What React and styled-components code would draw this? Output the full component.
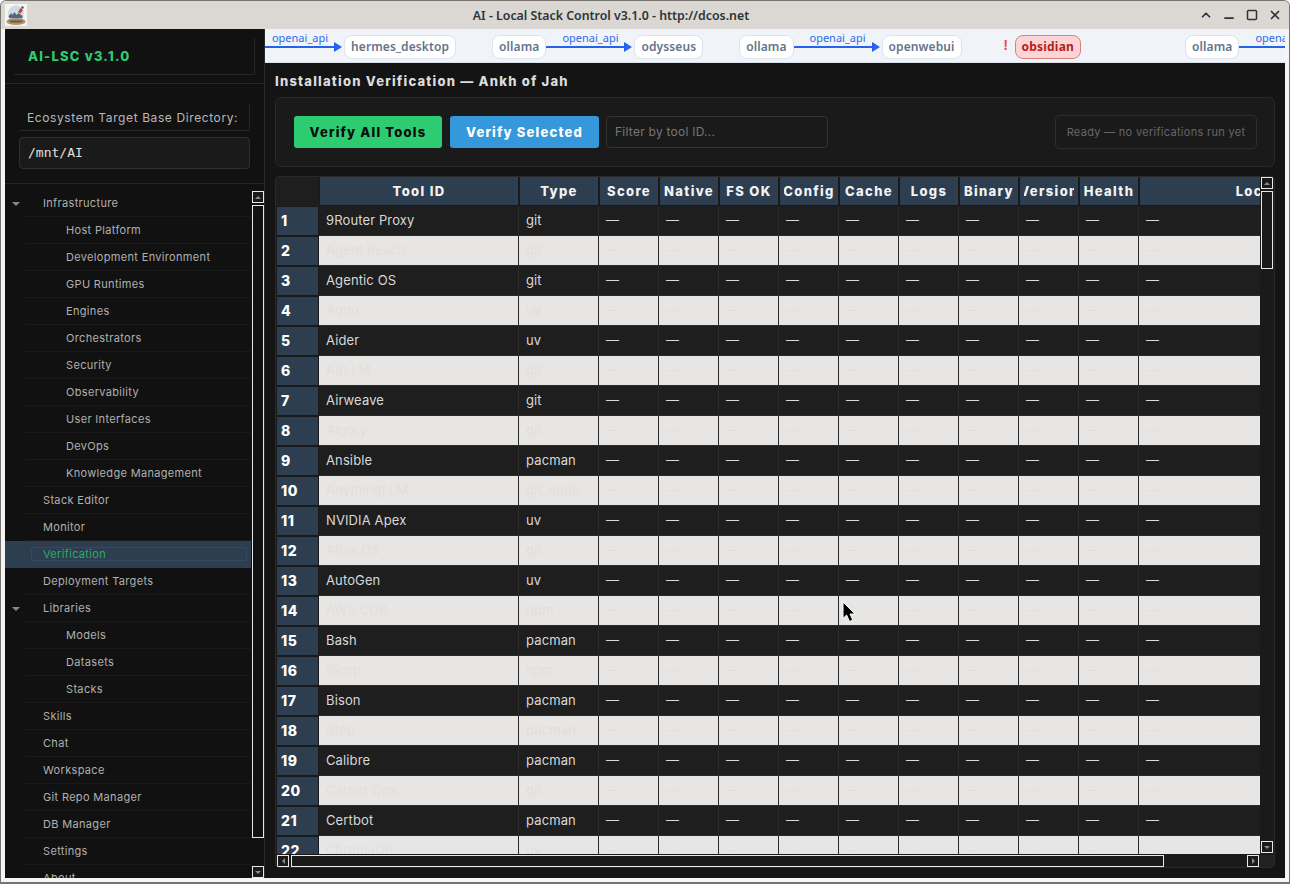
import React from 'react'
import styled, { createGlobalStyle } from 'styled-components'
import { ChevronUp, Minus, Square, X } from 'lucide-react'

const treeItems = [
  { label: 'Infrastructure', open: true },
  { label: 'Host Platform', child: true },
  { label: 'Development Environment', child: true },
  { label: 'GPU Runtimes', child: true },
  { label: 'Engines', child: true },
  { label: 'Orchestrators', child: true },
  { label: 'Security', child: true },
  { label: 'Observability', child: true },
  { label: 'User Interfaces', child: true },
  { label: 'DevOps', child: true },
  { label: 'Knowledge Management', child: true },
  { label: 'Stack Editor' },
  { label: 'Monitor' },
  { label: 'Verification', active: true },
  { label: 'Deployment Targets' },
  { label: 'Libraries', open: true },
  { label: 'Models', child: true },
  { label: 'Datasets', child: true },
  { label: 'Stacks', child: true },
  { label: 'Skills' },
  { label: 'Chat' },
  { label: 'Workspace' },
  { label: 'Git Repo Manager' },
  { label: 'DB Manager' },
  { label: 'Settings' },
  { label: 'About' },
]

const columns = ['Tool ID', 'Type', 'Score', 'Native', 'FS OK', 'Config', 'Cache', 'Logs', 'Binary', 'Version', 'Health', 'Location']

const tools = [
  ['9Router Proxy', 'git'],
  ['Agent Reach', 'git'],
  ['Agentic OS', 'git'],
  ['Agno', 'uv'],
  ['Aider', 'uv'],
  ['AirLLM', 'git'],
  ['Airweave', 'git'],
  ['Algory', 'git'],
  ['Ansible', 'pacman'],
  ['AnythingLLM', 'git_node'],
  ['NVIDIA Apex', 'uv'],
  ['Atlas OS', 'git'],
  ['AutoGen', 'uv'],
  ['AWS CDK', 'npm'],
  ['Bash', 'pacman'],
  ['Bicep', 'npm'],
  ['Bison', 'pacman'],
  ['Btop', 'pacman'],
  ['Calibre', 'pacman'],
  ['Career Ops', 'git'],
  ['Certbot', 'pacman'],
  ['ChromaDB', 'uv'],
]

const GRID = '200px 80px repeat(9, 60px) 260px'

const Arrow = ({ clipped }) => (
  <Edge $clipped={clipped}>
    <EdgeLabel>openai_api</EdgeLabel>
    <EdgeLine>
      <EdgeHead />
    </EdgeLine>
  </Edge>
)

const ScrollButton = ({ dir }) => (
  <ScrollBtn>
    <Tri $dir={dir} />
  </ScrollBtn>
)

const App = () => {
  return (
    <Window>
      <GlobalStyle />
      <TitleBar>
        <AppIcon viewBox="0 0 22 22">
          <rect width="22" height="22" fill="#f6f4ef" />
          <circle cx="11" cy="9.5" r="8" fill="#cfdbe4" />
          <path d="M3.5 12 l3 -3 l1 2 l2 -3 l2 3 l2 -2 l4 3 v2 H4z" fill="#4d6785" />
          <path d="M13 8 l2.5 -4 l2.5 2 l-2.5 3.5z" fill="#c2452e" />
          <path d="M16 3 l2 -1 l1 2 l-2 1z" fill="#2f5f9e" />
          <ellipse cx="11" cy="17.5" rx="9.5" ry="3.6" fill="#ab9270" />
          <path d="M4 16.5 h14 l-2 2 H6z" fill="#6d5a41" />
        </AppIcon>
        <WindowTitle>AI - Local Stack Control v3.1.0 - http://dcos.net</WindowTitle>
        <WindowControls>
          <ChevronUp size={14} strokeWidth={3} />
          <Minus size={14} strokeWidth={3} />
          <Square size={12} strokeWidth={3} />
          <X size={14} strokeWidth={3} />
        </WindowControls>
      </TitleBar>

      <Body>
        <Sidebar>
          <BrandBlock>
            <Brand>AI-LSC v3.1.0</Brand>
          </BrandBlock>
          <DirBlock>
            <DirLabel>Ecosystem Target Base Directory:</DirLabel>
            <DirInput>/mnt/AI</DirInput>
          </DirBlock>
          <TreeArea>
            <Tree>
              {treeItems.map((item) => (
                <TreeRow key={item.label} $active={item.active}>
                  {item.open && <TreeCaret />}
                  <TreeLabel $child={item.child} $active={item.active}>{item.label}</TreeLabel>
                </TreeRow>
              ))}
            </Tree>
            <TreeScroll>
              <ScrollButton dir="up" />
              <TreeThumb />
              <ScrollButton dir="down" />
            </TreeScroll>
          </TreeArea>
        </Sidebar>

        <Main>
          <Pipeline>
            <Arrow clipped />
            <Node>hermes_desktop</Node>
            <NodeGap $w={36} />
            <Node>ollama</Node>
            <Arrow />
            <Node>odysseus</Node>
            <NodeGap $w={36} />
            <Node>ollama</Node>
            <Arrow />
            <Node>openwebui</Node>
            <NodeGap $w={37} />
            <Warn>!</Warn>
            <Node $alert>obsidian</Node>
            <NodeGap $w={104} />
            <Node>ollama</Node>
            <Arrow />
          </Pipeline>

          <Content>
            <Heading>Installation Verification — Ankh of Jah</Heading>
            <Toolbar>
              <ActionButton $bg="#2ecc71" $fg="#0a0a0a" $w={148}>Verify All Tools</ActionButton>
              <ActionButton $bg="#3498db" $fg="#ffffff" $w={149}>Verify Selected</ActionButton>
              <Filter>Filter by tool ID...</Filter>
              <Status>Ready — no verifications run yet</Status>
            </Toolbar>

            <TableFrame>
              <TableTop>
                <TableView>
                  <HeaderRow>
                    <Corner />
                    <HeaderGrid>
                      {columns.map((c) => (
                        <HeaderCell key={c}>
                          <HeaderText><span>{c}</span></HeaderText>
                        </HeaderCell>
                      ))}
                    </HeaderGrid>
                  </HeaderRow>
                  {tools.map(([name, type], i) => (
                    <Row key={name}>
                      <RowNumber>{i + 1}</RowNumber>
                      <RowGrid $light={i % 2 === 1}>
                        <Cell>{name}</Cell>
                        <Cell>{type}</Cell>
                        {columns.slice(2).map((c) => (
                          <Cell key={c}>—</Cell>
                        ))}
                      </RowGrid>
                    </Row>
                  ))}
                </TableView>
                <VScroll>
                  <ScrollButton dir="up" />
                  <VThumbTrack>
                    <VThumb />
                  </VThumbTrack>
                  <ScrollButton dir="down" />
                </VScroll>
              </TableTop>
              <HScrollRow>
                <HScroll>
                  <ScrollButton dir="left" />
                  <HThumb />
                  <ScrollButton dir="right" />
                </HScroll>
                <ScrollCorner />
              </HScrollRow>
            </TableFrame>
          </Content>
        </Main>
      </Body>

      <Cursor viewBox="0 0 14 22">
        <path d="M1 1 V17.5 L4.6 14 L7.5 20.5 L10.8 19 L8 13 H13 Z" fill="#000" stroke="#fff" strokeWidth="1" />
      </Cursor>
    </Window>
  )
}

const GlobalStyle = createGlobalStyle`
  html, body {
    margin: 0;
    padding: 0;
    height: 100%;
    background: #ffffff;
  }
  * {
    box-sizing: border-box;
  }
`

const Window = styled.div`
  position: relative;
  width: 1290px;
  height: 884px;
  display: flex;
  flex-direction: column;
  overflow: hidden;
  background: #f6f5f3;
  border: 1px solid #77746f;
  border-bottom-width: 2px;
  border-top-left-radius: 6px;
  border-top-right-radius: 6px;
  padding: 0 4px 4px 4px;
  font-family: Inter, "Noto Sans", sans-serif;
`

const TitleBar = styled.div`
  height: 28px;
  margin: 0 -4px;
  padding: 0 7px 0 4px;
  flex: none;
  display: flex;
  align-items: center;
  background: #dbd7d3;
  color: #2e3436;
`

const AppIcon = styled.svg`
  width: 22px;
  height: 22px;
  flex: none;
`

const WindowTitle = styled.div`
  flex: 1;
  padding-right: 4px;
  text-align: center;
  font-family: "Noto Sans", sans-serif;
  font-weight: 600;
  font-size: 12.35px;
`

const WindowControls = styled.div`
  flex: none;
  display: flex;
  align-items: center;
  gap: 9px;
  color: #2e3436;
  & > svg:nth-child(2) {
    transform: translateY(3px);
  }
  & > svg:nth-child(3) {
    margin: 0 1px;
  }
`

const Body = styled.div`
  flex: 1;
  min-height: 0;
  display: flex;
`

const Sidebar = styled.aside`
  width: 260px;
  flex: none;
  display: flex;
  flex-direction: column;
  background: #111111;
  border-right: 1px solid #2a2a2a;
`

const BrandBlock = styled.div`
  height: 55px;
  flex: none;
  padding: 9px;
  border-bottom: 1px solid #262626;
`

const Brand = styled.div`
  height: 37px;
  padding: 9px 0 0 14px;
  border-right: 1px solid #262626;
  border-bottom: 1px solid #262626;
  color: #2ecc71;
  font-weight: 800;
  font-size: 13px;
  letter-spacing: 1.2px;
  line-height: 18px;
`

const DirBlock = styled.div`
  height: 100px;
  flex: none;
  padding: 20px 14px 0 14px;
  display: flex;
  flex-direction: column;
  gap: 6px;
  border-bottom: 1px solid #262626;
`

const DirLabel = styled.div`
  height: 27px;
  padding-left: 8px;
  border-right: 1px solid #262626;
  border-bottom: 1px solid #262626;
  color: #b8b8b8;
  font-size: 12px;
  letter-spacing: 0.6px;
  line-height: 27px;
  white-space: nowrap;
`

const DirInput = styled.div`
  height: 32px;
  padding-left: 8px;
  border: 1px solid #2f2f2f;
  border-radius: 4px;
  background: #1a1a1a;
  color: #e0e0e0;
  font-family: "DejaVu Sans Mono", monospace;
  font-size: 13px;
  line-height: 30px;
`

const TreeArea = styled.div`
  flex: 1;
  min-height: 0;
  display: flex;
  padding-top: 6px;
  overflow: hidden;
`

const Tree = styled.div`
  flex: 1;
  min-width: 0;
`

const TreeRow = styled.div`
  height: 27px;
  padding-bottom: 2px;
  position: relative;
  display: flex;
  align-items: center;
  background: ${(p) => (p.$active ? '#2c3e50' : 'transparent')};
  &::after {
    content: '';
    position: absolute;
    left: 20px;
    right: 0;
    bottom: 0;
    height: 1px;
    background: ${(p) => (p.$active ? '#2c3e50' : '#1a1a1a')};
  }
`

const TreeCaret = styled.span`
  position: absolute;
  left: 7px;
  top: 12px;
  border-left: 4px solid transparent;
  border-right: 4px solid transparent;
  border-top: 4px solid #8a8a8a;
`

const TreeLabel = styled.span`
  margin-left: ${(p) => (p.$child ? '61px' : '38px')};
  font-size: 11px;
  letter-spacing: 0.33px;
  white-space: nowrap;
  position: relative;
  color: ${(p) => (p.$active ? '#27ae60' : '#b0b0b0')};
  &::before {
    content: ${(p) => (p.$active ? "''" : 'none')};
    position: absolute;
    left: -12px;
    top: 0;
    bottom: 0;
    width: 214px;
    border: 1px solid #34495e;
    border-radius: 2px;
  }
`

const TreeScroll = styled.div`
  width: 13px;
  flex: none;
  display: flex;
  flex-direction: column;
  gap: 2px;
  margin-top: 1px;
  padding-left: 1px;
`

const TreeThumb = styled.div`
  flex: 1;
  border: 1px solid #e8e8e8;
  background: #111111;
  margin-bottom: 26px;
`

const ScrollBtn = styled.div`
  width: 12px;
  height: 12px;
  flex: none;
  display: flex;
  align-items: center;
  justify-content: center;
  border: 1px solid #e8e8e8;
  background: #1a1a1a;
`

const Tri = styled.span`
  width: 0;
  height: 0;
  border-style: solid;
  border-color: transparent;
  ${(p) => p.$dir === 'up' && 'border-width: 0 3px 3px 3px; border-bottom-color: #8a8a8a;'}
  ${(p) => p.$dir === 'down' && 'border-width: 3px 3px 0 3px; border-top-color: #8a8a8a;'}
  ${(p) => p.$dir === 'left' && 'border-width: 3px 3px 3px 0; border-right-color: #8a8a8a;'}
  ${(p) => p.$dir === 'right' && 'border-width: 3px 0 3px 3px; border-left-color: #8a8a8a;'}
`

const Main = styled.main`
  flex: 1;
  min-width: 0;
  display: flex;
  flex-direction: column;
  background: #141414;
`

const Pipeline = styled.div`
  height: 34px;
  flex: none;
  display: flex;
  align-items: center;
  overflow: hidden;
  background: #f0f4f9;
  border-bottom: 1px solid #dde3ea;
  padding-top: 2px;
`

const Edge = styled.div`
  position: relative;
  width: 88px;
  flex: none;
  height: 24px;
  margin-left: ${(p) => (p.$clipped ? '-9px' : '0')};
`

const EdgeLabel = styled.span`
  position: absolute;
  top: -5px;
  left: 50%;
  transform: translateX(-50%);
  font-family: "Noto Sans", sans-serif;
  font-size: 11px;
  line-height: 15px;
  color: #2f6bea;
  white-space: nowrap;
`

const EdgeLine = styled.div`
  position: absolute;
  left: 0;
  right: 5px;
  top: 11px;
  height: 2px;
  background: #2563eb;
`

const EdgeHead = styled.span`
  position: absolute;
  right: -3px;
  top: -4px;
  border-style: solid;
  border-width: 5px 0 5px 8px;
  border-color: transparent transparent transparent #2563eb;
`

const Node = styled.div`
  flex: none;
  height: 24px;
  padding: 0 6px;
  display: flex;
  align-items: center;
  border-radius: 8px;
  border: 1.5px solid ${(p) => (p.$alert ? '#dc7f7f' : '#dde4ee')};
  background: ${(p) => (p.$alert ? '#fbd5d5' : '#ffffff')};
  color: ${(p) => (p.$alert ? '#b91c1c' : '#64748b')};
  font-family: "Noto Sans", sans-serif;
  font-weight: ${(p) => (p.$alert ? 700 : 600)};
  font-size: 12px;
  letter-spacing: ${(p) => (p.$alert ? '0.2px' : '0.1px')};
`

const NodeGap = styled.div`
  width: ${(p) => p.$w}px;
  flex: none;
`

const Warn = styled.span`
  width: 14px;
  margin-right: 2px;
  flex: none;
  margin-top: -5px;
  text-align: center;
  color: #ef4444;
  font-family: "Noto Sans", sans-serif;
  font-weight: 600;
  font-size: 14px;
`

const Content = styled.div`
  flex: 1;
  min-height: 0;
  display: flex;
  flex-direction: column;
  padding: 10px;
`

const Heading = styled.h2`
  margin: 0 0 8px 0;
  height: 16px;
  line-height: 16px;
  font-size: 13px;
  font-weight: 800;
  letter-spacing: 1.22px;
  color: #dcdcdc;
  white-space: nowrap;
`

const Toolbar = styled.div`
  height: 70px;
  flex: none;
  display: flex;
  align-items: center;
  padding: 0 17px 0 18px;
  gap: 8px;
  background: #1a1a1a;
  border: 1px solid #2a2a2a;
  border-radius: 6px;
`

const ActionButton = styled.button`
  width: ${(p) => p.$w}px;
  height: 32px;
  padding: 0;
  border: 0;
  border-radius: 3px;
  background: ${(p) => p.$bg};
  color: ${(p) => p.$fg};
  font-family: Inter, sans-serif;
  font-weight: 800;
  font-size: 13px;
  letter-spacing: 1.2px;
`

const Filter = styled.div`
  width: 222px;
  height: 32px;
  margin-left: -1px;
  padding-left: 8px;
  border: 1px solid #333333;
  border-radius: 4px;
  background: #1a1a1a;
  color: #777777;
  font-size: 12px;
  line-height: 30px;
  letter-spacing: 0.25px;
`

const Status = styled.div`
  margin-left: auto;
  width: 202px;
  height: 34px;
  border: 1px solid #2e2e2e;
  border-radius: 5px;
  color: #666666;
  font-size: 11px;
  letter-spacing: 0.3px;
  line-height: 32px;
  text-align: center;
  white-space: nowrap;
`

const TableFrame = styled.div`
  margin-top: 9px;
  width: 1000px;
  flex: 1;
  min-height: 0;
  display: flex;
  flex-direction: column;
  border: 1px solid #2a2a2a;
  border-radius: 4px;
  background: #1a1a1a;
  overflow: hidden;
`

const TableTop = styled.div`
  flex: 1;
  min-height: 0;
  display: flex;
`

const TableView = styled.div`
  flex: 1;
  min-width: 0;
  overflow: hidden;
`

const HeaderRow = styled.div`
  display: flex;
  height: 29px;
`

const Corner = styled.div`
  width: 43px;
  flex: none;
  background: #1e1e1e;
`

const HeaderGrid = styled.div`
  display: grid;
  grid-template-columns: ${GRID};
  flex: none;
`

const HeaderCell = styled.div`
  height: 28px;
  margin: 0 1px;
  padding: 0 4px;
  display: flex;
  align-items: center;
  background: #2c3e50;
  color: #f2f2f2;
  font-weight: 800;
  font-size: 13px;
  letter-spacing: 1.35px;
  white-space: nowrap;
`

const HeaderText = styled.div`
  width: 100%;
  display: flex;
  justify-content: center;
  overflow: hidden;
  & > span {
    flex: none;
  }
`

const Row = styled.div`
  display: flex;
  height: 30px;
`

const RowNumber = styled.div`
  width: 41px;
  flex: none;
  margin: 1px;
  padding-left: 4px;
  background: #2c3e50;
  color: #ffffff;
  font-weight: 800;
  font-size: 14px;
  letter-spacing: 0.6px;
  line-height: 28px;
`

const RowGrid = styled.div`
  display: grid;
  grid-template-columns: ${GRID};
  flex: none;
  background: ${(p) => (p.$light ? '#e8e6e4' : '#1e1e1e')};
  color: ${(p) => (p.$light ? '#e1dfdd' : '#d8d8d8')};
  border-bottom: 1px solid #2a2a2a;
`

const Cell = styled.div`
  padding-left: 7px;
  border-right: 1px solid #2a2a2a;
  font-size: 13px;
  letter-spacing: 0.12px;
  line-height: 28px;
  white-space: nowrap;
  overflow: hidden;
`

const VScroll = styled.div`
  width: 14px;
  flex: none;
  display: flex;
  flex-direction: column;
  gap: 2px;
  padding: 0 1px 1px 1px;
`

const VThumbTrack = styled.div`
  flex: 1;
  min-height: 0;
`

const VThumb = styled.div`
  height: 78px;
  border: 1px solid #e8e8e8;
  background: #1a1a1a;
`

const HScrollRow = styled.div`
  height: 13px;
  flex: none;
  display: flex;
  padding-top: 1px;
`

const HScroll = styled.div`
  flex: 1;
  min-width: 0;
  display: flex;
  gap: 2px;
  padding: 0 1px;
`

const HThumb = styled.div`
  width: 873px;
  margin-right: auto;
  border: 1px solid #e8e8e8;
  background: #1a1a1a;
`

const ScrollCorner = styled.div`
  width: 14px;
  flex: none;
  background: #222222;
`

const Cursor = styled.svg`
  position: absolute;
  left: 841px;
  top: 600px;
  width: 14px;
  height: 22px;
`

export default App
